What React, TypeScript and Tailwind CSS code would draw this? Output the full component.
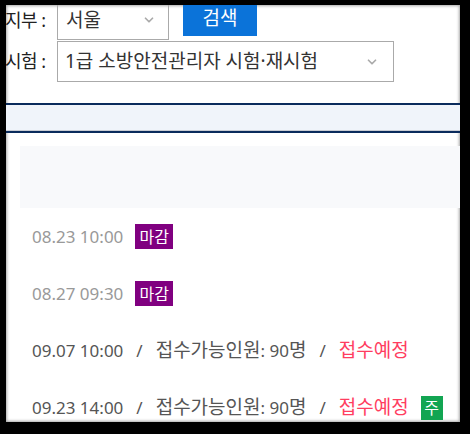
import { ChevronDown } from 'lucide-react';

const font = { fontFamily: '"Segoe UI", "Noto Sans", "Noto Sans CJK KR", sans-serif' };

type Row = {
  time: string;
  closed?: boolean;
  seats?: string;
  status?: string;
  week?: boolean;
};

const rows: Row[] = [
  { time: '08.23 10:00', closed: true },
  { time: '08.27 09:30', closed: true },
  { time: '09.07 10:00', seats: '90', status: '접수예정' },
  { time: '09.23 14:00', seats: '90', status: '접수예정', week: true },
];

function Slash() {
  return <span className="mx-[13px] text-[#555]">/</span>;
}

export default function App() {
  return (
    <div className="w-[470px] h-[434px] bg-black pt-[5px] pl-[6px]" style={font}>
      <div className="w-[454px] h-[417px] bg-white overflow-hidden shadow-[inset_0_0_3px_1px_rgba(0,0,0,0.35)]">
        <div className="-mt-[5px] -ml-[1px]">
          {/* 지부 */}
          <div className="flex items-start">
            <div className="w-[52px] h-[40px] flex items-center text-[18px] text-[#222] tracking-[-0.5px]">지부 :</div>
            <div className="w-[112px] h-[40px] border border-[#aaa] flex items-center justify-between pl-[8px] pr-[12px] text-[19px] text-[#333]">
              <span>서울</span>
              <ChevronDown className="w-[14px] h-[14px] text-[#aaa]" strokeWidth={3} />
            </div>
            <div className="ml-[14px] w-[74px] h-[36px] bg-[#0b73d9] text-white text-[19px] flex items-center justify-center">
              검색
            </div>
          </div>
          {/* 시험 */}
          <div className="flex items-start mt-[1px]">
            <div className="w-[52px] h-[41px] flex items-center text-[18px] text-[#222] tracking-[-0.5px]">시험 :</div>
            <div className="w-[337px] h-[41px] border border-[#aaa] flex items-center justify-between pl-[7px] pr-[14px] text-[19px] text-[#333]">
              <span>1급 소방안전관리자 시험·재시험</span>
              <ChevronDown className="w-[14px] h-[14px] text-[#aaa]" strokeWidth={3} />
            </div>
          </div>
        </div>

        <div className="mt-[21px] h-[30px] border-t-2 border-[#0a2b5c] bg-[#f0f4fa]">
          <div className="h-[25px]" />
          <div className="h-px bg-[#c8ccd4]" />
          <div className="h-[2px] bg-[#0a2b5c]" />
        </div>

        <div className="mt-[13px] ml-[14px] h-[62px] bg-[#f8f9fb]" />

        <div className="pl-[26px]">
          {rows.map((r) => (
            <div key={r.time} className="h-[57px] flex items-center text-[17px]">
              <span className={r.closed ? 'text-[#999]' : 'text-[#555]'}>{r.time}</span>
              {r.closed && (
                <span className="ml-[12px] w-[38px] h-[25px] bg-[#800080] text-white text-[16px] flex items-center justify-center">
                  마감
                </span>
              )}
              {r.seats && (
                <>
                  <Slash />
                  <span className="text-[#555]">
                    <span className="text-[19px]">접수가능인원</span>: {r.seats}
                    <span className="text-[19px]">명</span>
                  </span>
                  <Slash />
                  <span className="text-[#ff3d5f] text-[19px]">{r.status}</span>
                </>
              )}
              {r.week && (
                <span className="ml-[12px] w-[22px] h-[24px] bg-[#12a552] text-white text-[16px] flex items-center justify-center">
                  주
                </span>
              )}
            </div>
          ))}
        </div>
      </div>
    </div>
  );
}
